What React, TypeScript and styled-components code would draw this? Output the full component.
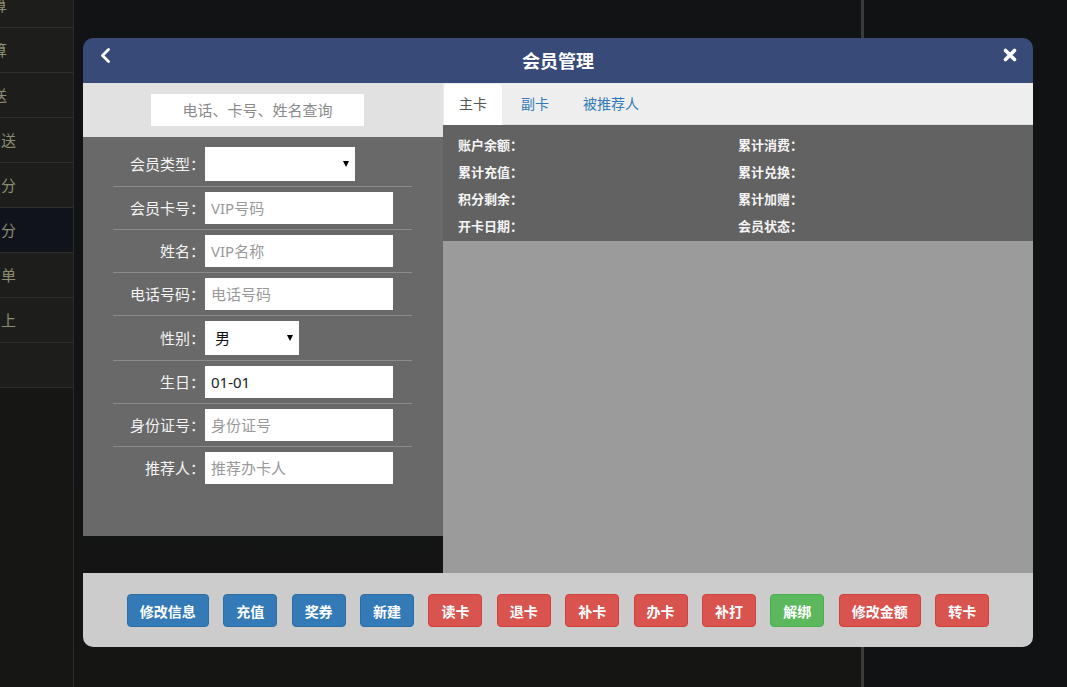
import React from "react";
import styled, { createGlobalStyle } from "styled-components";

const GlobalStyle = createGlobalStyle`
  html, body {
    margin: 0;
    padding: 0;
  }
  body {
    background: #121315;
    font-family: "Noto Sans", "Noto Sans CJK SC", sans-serif;
  }
  * {
    box-sizing: border-box;
  }
`;

const Page = styled.div`
  position: relative;
  display: flex;
  width: 1067px;
  height: 687px;
  overflow: hidden;
  background: #121315;
`;

const Sidebar = styled.nav`
  width: 74px;
  flex-shrink: 0;
  background: #161614;
  border-right: 1px solid #2b2c29;
  overflow: hidden;
`;

const SideList = styled.ul`
  list-style: none;
  margin: -17px 0 0;
  padding: 0;
`;

const SideItem = styled.li<{ $active?: boolean; $shift: number }>`
  height: 45px;
  line-height: 44px;
  border-bottom: 1px solid #2e2f2b;
  background: ${(p) => (p.$active ? "#11131c" : "#1d1e1b")};
  color: #8c8d72;
  font-size: 15px;
  text-indent: ${(p) => p.$shift}px;
  white-space: nowrap;
`;

const Backdrop = styled.div`
  width: 790px;
  flex-shrink: 0;
  border-right: 3px solid #3a3b3c;
  background: linear-gradient(to bottom, #111315 0%, #111315 50%, #151513 100%);
`;

const Rest = styled.div`
  flex: 1;
  background: #111214;
`;

const Modal = styled.section`
  position: absolute;
  left: 83px;
  top: 38px;
  width: 950px;
  height: 609px;
  display: flex;
  flex-direction: column;
  border-radius: 10px;
  overflow: hidden;
`;

const Header = styled.header`
  height: 45px;
  flex-shrink: 0;
  display: grid;
  grid-template-columns: 60px 1fr 60px;
  background: #384a78;
  color: #fff;
`;

const HeadIcon = styled.button<{ $side: "left" | "right" }>`
  display: flex;
  justify-content: ${(p) => (p.$side === "left" ? "flex-start" : "flex-end")};
  align-items: flex-start;
  padding: 10px ${(p) => (p.$side === "left" ? "0 0 17px" : "16px 0 0")};
  background: none;
  border: 0;
  cursor: pointer;
`;

const Title = styled.h1`
  margin: 0;
  font-size: 18px;
  font-weight: 700;
  line-height: 45px;
  text-align: center;
  padding-top: 1px;
`;

const Body = styled.div`
  height: 490px;
  flex-shrink: 0;
  display: flex;
`;

const LeftCol = styled.div`
  width: 360px;
  flex-shrink: 0;
  display: flex;
  flex-direction: column;
`;

const SearchBar = styled.div`
  height: 54px;
  background: #e1e1e1;
  padding: 11px 0 0 68px;
`;

const SearchInput = styled.input`
  width: 213px;
  height: 32px;
  border: 0;
  outline: none;
  background: #fff;
  text-align: center;
  font: 15px "Noto Sans", "Noto Sans CJK SC", sans-serif;
  color: #333;
  &::placeholder {
    color: #8a8a8a;
  }
`;

const Form = styled.div`
  height: 399px;
  background: #696969;
  padding: 5px 31px 0 30px;
`;

const Row = styled.div`
  display: flex;
  align-items: center;
  padding: 5px 0;
  border-bottom: 1px solid #8b8b8b;
  &:last-child {
    border-bottom: 0;
  }
`;

const Label = styled.label`
  width: 92px;
  flex-shrink: 0;
  text-align: right;
  color: #f4f4f4;
  font-size: 15px;
  line-height: 20px;
`;

const TextInput = styled.input`
  width: 188px;
  height: 32px;
  border: 0;
  outline: none;
  padding: 0 6px;
  background: #fff;
  font: 15px "Noto Sans", "Noto Sans CJK SC", sans-serif;
  color: #222;
  &::placeholder {
    color: #999;
  }
`;

const SelectWrap = styled.div<{ $width: number }>`
  position: relative;
  width: ${(p) => p.$width}px;
  height: 34px;
`;

const Select = styled.select`
  appearance: none;
  width: 100%;
  height: 34px;
  border: 0;
  outline: none;
  border-radius: 0;
  background: #fff;
  padding: 0 10px;
  font: 15px "Noto Sans", "Noto Sans CJK SC", sans-serif;
  color: #111;
`;

const Caret = styled.span`
  position: absolute;
  right: 6px;
  top: 14px;
  width: 0;
  height: 0;
  border-left: 3px solid transparent;
  border-right: 3px solid transparent;
  border-top: 6px solid #000;
  pointer-events: none;
`;

const RightCol = styled.div`
  flex: 1;
  display: flex;
  flex-direction: column;
  background: #9b9b9b;
`;

const Tabs = styled.div`
  height: 42px;
  display: flex;
  align-items: flex-start;
  gap: 4px;
  padding: 1px 0 0 1px;
  background: #eeeeee;
  border-bottom: 1px solid #dddddd;
`;

const Tab = styled.div<{ $active?: boolean }>`
  height: 41px;
  margin-bottom: -1px;
  padding: 0 15px;
  line-height: 40px;
  font-size: 14px;
  border-radius: 4px 4px 0 0;
  background: ${(p) => (p.$active ? "#fff" : "transparent")};
  color: ${(p) => (p.$active ? "#555" : "#337ab7")};
  cursor: pointer;
`;

const Info = styled.div`
  height: 116px;
  display: grid;
  grid-template-columns: 280px 1fr;
  grid-auto-rows: 27px;
  align-items: center;
  padding: 6px 15px 2px;
  background: #626262;
  color: #f5f5f5;
  font-size: 13px;
  font-weight: 700;
`;

const Footer = styled.footer`
  height: 74px;
  flex-shrink: 0;
  display: flex;
  justify-content: center;
  align-items: flex-start;
  gap: 14.4px;
  padding-top: 21px;
  background: #cccccc;
`;

const palette = {
  primary: { bg: "#337ab7", border: "#2e6da4" },
  danger: { bg: "#d9534f", border: "#d43f3a" },
  success: { bg: "#5cb85c", border: "#4cae4c" },
};

type Tone = keyof typeof palette;

const Button = styled.button<{ $tone: Tone }>`
  height: 33px;
  padding: 0 12px;
  border: 1px solid ${(p) => palette[p.$tone].border};
  border-radius: 4px;
  background: ${(p) => palette[p.$tone].bg};
  color: #fff;
  font: 700 14px "Noto Sans", "Noto Sans CJK SC", sans-serif;
  white-space: nowrap;
  cursor: pointer;
`;

const sideItems = [
  { t: "算", shift: -8 },
  { t: "算", shift: -8 },
  { t: "送", shift: -8 },
  { t: "送", shift: 1 },
  { t: "分", shift: 1 },
  { t: "分", shift: 1, active: true },
  { t: "单", shift: 1 },
  { t: "上", shift: 1 },
  { t: "", shift: 1 },
];

const infoItems = [
  "账户余额：",
  "累计消费：",
  "累计充值：",
  "累计兑换：",
  "积分剩余：",
  "累计加赠：",
  "开卡日期：",
  "会员状态：",
];

const buttons: { label: string; tone: Tone }[] = [
  { label: "修改信息", tone: "primary" },
  { label: "充值", tone: "primary" },
  { label: "奖券", tone: "primary" },
  { label: "新建", tone: "primary" },
  { label: "读卡", tone: "danger" },
  { label: "退卡", tone: "danger" },
  { label: "补卡", tone: "danger" },
  { label: "办卡", tone: "danger" },
  { label: "补打", tone: "danger" },
  { label: "解绑", tone: "success" },
  { label: "修改金额", tone: "danger" },
  { label: "转卡", tone: "danger" },
];

function BackIcon() {
  return (
    <svg width="11" height="15" viewBox="0 0 11 15">
      <polyline
        points="8.5,1.5 2.5,7.5 8.5,13.5"
        fill="none"
        stroke="#fff"
        strokeWidth="2.8"
        strokeLinecap="round"
        strokeLinejoin="round"
      />
    </svg>
  );
}

function CloseIcon() {
  return (
    <svg width="14" height="14" viewBox="0 0 14 14">
      <path
        d="M2.5 2.5 L11.5 11.5 M11.5 2.5 L2.5 11.5"
        stroke="#fff"
        strokeWidth="3.6"
        strokeLinecap="round"
      />
    </svg>
  );
}

export default function App() {
  return (
    <>
      <GlobalStyle />
      <Page>
        <Sidebar>
          <SideList>
            {sideItems.map((s, i) => (
              <SideItem key={i} $shift={s.shift} $active={s.active}>
                {s.t}
              </SideItem>
            ))}
          </SideList>
        </Sidebar>
        <Backdrop />
        <Rest />

        <Modal>
          <Header>
            <HeadIcon $side="left" aria-label="返回">
              <BackIcon />
            </HeadIcon>
            <Title>会员管理</Title>
            <HeadIcon $side="right" aria-label="关闭">
              <CloseIcon />
            </HeadIcon>
          </Header>

          <Body>
            <LeftCol>
              <SearchBar>
                <SearchInput placeholder="电话、卡号、姓名查询" />
              </SearchBar>
              <Form>
                <Row>
                  <Label>会员类型：</Label>
                  <SelectWrap $width={150}>
                    <Select defaultValue="">
                      <option value=""></option>
                    </Select>
                    <Caret />
                  </SelectWrap>
                </Row>
                <Row>
                  <Label>会员卡号：</Label>
                  <TextInput placeholder="VIP号码" />
                </Row>
                <Row>
                  <Label>姓名：</Label>
                  <TextInput placeholder="VIP名称" />
                </Row>
                <Row>
                  <Label>电话号码：</Label>
                  <TextInput placeholder="电话号码" />
                </Row>
                <Row>
                  <Label>性别：</Label>
                  <SelectWrap $width={94}>
                    <Select defaultValue="男">
                      <option value="男">男</option>
                      <option value="女">女</option>
                    </Select>
                    <Caret />
                  </SelectWrap>
                </Row>
                <Row>
                  <Label>生日：</Label>
                  <TextInput defaultValue="01-01" />
                </Row>
                <Row>
                  <Label>身份证号：</Label>
                  <TextInput placeholder="身份证号" />
                </Row>
                <Row>
                  <Label>推荐人：</Label>
                  <TextInput placeholder="推荐办卡人" />
                </Row>
              </Form>
            </LeftCol>

            <RightCol>
              <Tabs>
                <Tab $active>主卡</Tab>
                <Tab>副卡</Tab>
                <Tab>被推荐人</Tab>
              </Tabs>
              <Info>
                {infoItems.map((t) => (
                  <div key={t}>{t}</div>
                ))}
              </Info>
            </RightCol>
          </Body>

          <Footer>
            {buttons.map((b) => (
              <Button key={b.label} $tone={b.tone}>
                {b.label}
              </Button>
            ))}
          </Footer>
        </Modal>
      </Page>
    </>
  );
}
